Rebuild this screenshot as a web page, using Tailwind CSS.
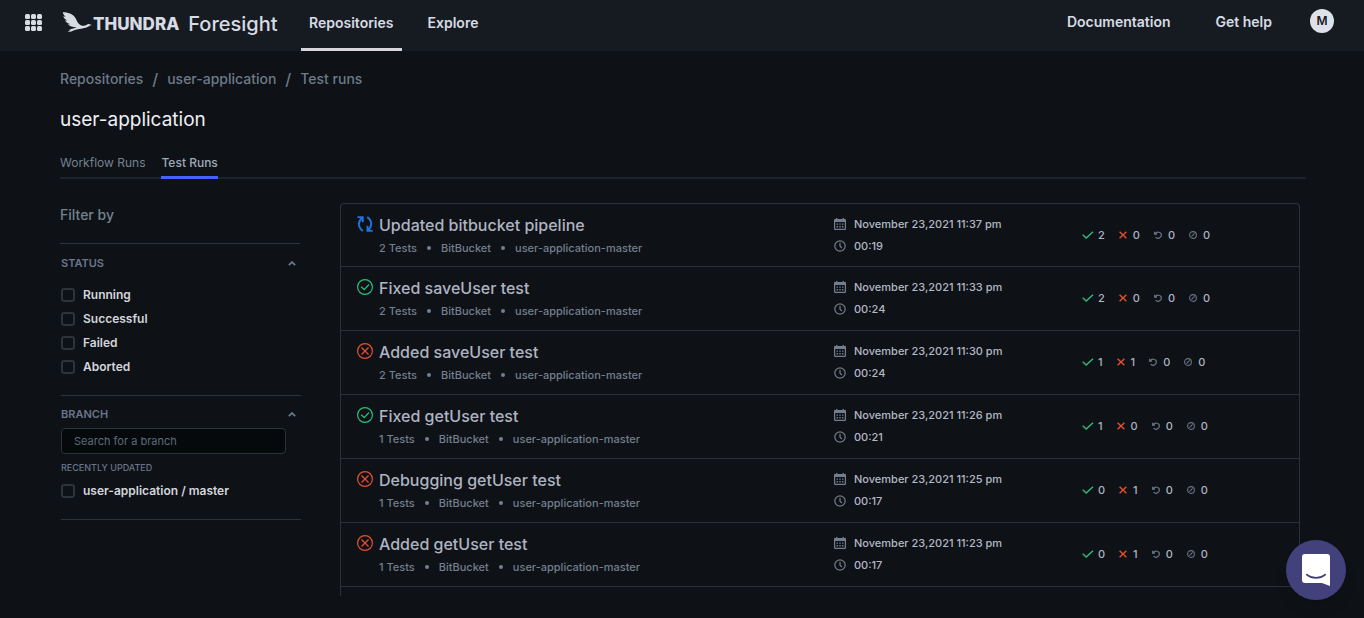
<!DOCTYPE html>
<html lang="en">
<head>
<meta charset="utf-8">
<meta name="viewport" content="width=device-width, initial-scale=1">
<title>user-application · Test runs</title>
<script src="https://cdn.jsdelivr.net/npm/@tailwindcss/browser@4"></script>
</head>
<body class="min-h-screen bg-[#0e1116] font-['Inter',sans-serif] text-[#d8dbe4]">

<svg class="hidden" aria-hidden="true">
  <symbol id="i-running" viewBox="0 0 16 16"><path d="M0.5 1.1H5.7V6.2M5.3 1.5C1.2 5.3 .2 10.8 5.8 14.9M15.7 14.9H10.5V9.8M10.9 14.5C15 10.7 15.8 4.9 10.2 1.1" fill="none" stroke="currentColor" stroke-width="1.9"/></symbol>
  <symbol id="i-ok" viewBox="0 0 16 16"><circle cx="8" cy="8" r="7.4" fill="none" stroke="currentColor" stroke-width="1.2"/><path d="M4.2 7.8L7.2 10.6L12 5.5" fill="none" stroke="currentColor" stroke-width="1.3"/></symbol>
  <symbol id="i-fail" viewBox="0 0 16 16"><circle cx="8" cy="8" r="7.4" fill="none" stroke="currentColor" stroke-width="1.2"/><path d="M4.5 4.5L11.5 11.5M11.5 4.5L4.5 11.5" fill="none" stroke="currentColor" stroke-width="1.2"/></symbol>
  <symbol id="i-calendar" viewBox="0 0 12 12"><path d="M1.2 1.5H10.8Q11.4 1.5 11.4 2.1V10.8Q11.4 11.4 10.8 11.4H1.2Q.6 11.4 .6 10.8V2.1Q.6 1.5 1.2 1.5Z" fill="none" stroke="currentColor" stroke-width="1.2"/><path d="M.6 1.5H11.4V4H.6ZM2 0H3.4V2H2ZM8.6 0H10V2H8.6ZM2.6 5.4h1.4v1.4h-1.4zM5.3 5.4h1.4v1.4h-1.4zM8 5.4h1.4v1.4H8zM2.6 8h1.4v1.4h-1.4zM5.3 8h1.4v1.4h-1.4zM8 8h1.4v1.4H8z" fill="currentColor"/></symbol>
  <symbol id="i-clock" viewBox="0 0 12 12"><circle cx="6" cy="6" r="5.2" fill="none" stroke="currentColor" stroke-width="1.2"/><path d="M6 2.8V6L7.8 8.2" fill="none" stroke="currentColor" stroke-width="1.2"/></symbol>
  <symbol id="i-check" viewBox="0 0 12 8"><path d="M.7 3.8L4.2 7L11 .8" fill="none" stroke="currentColor" stroke-width="1.4"/></symbol>
  <symbol id="i-cross" viewBox="0 0 8 8"><path d="M.6 .8L7.4 7.2M7.4 .8L.6 7.2" fill="none" stroke="currentColor" stroke-width="1.4"/></symbol>
  <symbol id="i-retry" viewBox="0 0 8 8"><path d="M.5 .8V3.2H3M.8 3C2.6 .2 7.4 .7 7.4 4.1C7.4 7.4 3.2 8.3 1.6 6.2" fill="none" stroke="currentColor" stroke-width="1.2"/></symbol>
  <symbol id="i-skip" viewBox="0 0 8 8"><circle cx="4" cy="4" r="3.4" fill="none" stroke="currentColor" stroke-width="1.1"/><path d="M2.4 5.6L5.6 2.4" stroke="currentColor" stroke-width="1.1"/></symbol>
  <symbol id="i-up" viewBox="0 0 8 5"><path d="M.8 4.2L4 1.1L7.2 4.2" fill="none" stroke="currentColor" stroke-width="1.8"/></symbol>
</svg>

<header class="flex h-[51px] items-start bg-[#161b22] pl-6 pr-[30px]">
  <button type="button" aria-label="Apps" class="mt-[13px] size-[18px]">
    <svg viewBox="0 0 18 18" class="size-[18px] fill-[#d8dbe4]"><rect x="1" y="1" width="5" height="5" rx="1.5"/><rect x="7" y="1" width="5" height="5" rx="1.5"/><rect x="13" y="1" width="5" height="5" rx="1.5"/><rect x="1" y="7" width="5" height="5" rx="1.5"/><rect x="7" y="7" width="5" height="5" rx="1.5"/><rect x="13" y="7" width="5" height="5" rx="1.5"/><rect x="1" y="13" width="5" height="5" rx="1.5"/><rect x="7" y="13" width="5" height="5" rx="1.5"/><rect x="13" y="13" width="5" height="5" rx="1.5"/></svg>
  </button>
  <a href="#" class="ml-5 mt-3 flex w-[239px] items-start whitespace-nowrap">
    <svg viewBox="0 0 30 20" class="h-5 w-[30px] shrink-0 fill-[#d8dbe4]"><path d="M.8 .3C5.5 .3 11 1.8 13.4 6C14.8 8.4 15.4 11.2 18.3 12.9C20.6 14 22.7 14.1 24.4 13.1C25.4 12.2 26.6 11.8 27.6 12.3L29.8 13L27.6 13.8C25.8 15.2 23.4 16.2 20.5 16.4C16.5 16.8 12.5 17.5 8.6 19.8L5.6 19.6L9 17.8L6.8 17.7C10.4 16.4 12.6 16.3 14.6 15.4C10.6 15.1 7.5 14.2 5.8 12.2L8.4 12.3C5.6 11.4 3.9 10.2 3 8.3L5.5 8.7C3.2 7.4 1.8 6 1.3 4.2L3.8 4.8C2.1 3.6 1.1 2.1 .8 .3Z"/></svg>
    <span class="ml-px text-[17px] leading-6 font-extrabold">THUNDRA</span>
    <span class="ml-[9px] text-xl leading-6 font-medium">Foresight</span>
  </a>
  <nav class="flex h-full text-sm leading-5 font-semibold">
    <a href="#" class="mr-[18px] h-full border-b-3 border-[#d6d5dc] px-2 pt-[13px]">Repositories</a>
    <a href="#" class="h-full px-2 pt-[13px]">Explore</a>
  </nav>
  <div class="ml-auto flex text-sm leading-5 font-semibold">
    <a href="#" class="mr-[45px] pt-3">Documentation</a>
    <a href="#" class="mr-[38px] pt-3">Get help</a>
    <button type="button" aria-label="Account" class="mt-[9px] size-6 rounded-full bg-[#dfe1ea] text-xs font-semibold text-[#161b22]">M</button>
  </div>
</header>

<main class="px-[60px] pr-[58px]">
  <nav aria-label="Breadcrumb" class="flex gap-[9px] pt-[18px] text-sm leading-5 font-medium text-[#6d7a8a]">
    <a href="#">Repositories</a><span class="text-base leading-5">/</span><a href="#">user-application</a><span class="text-base leading-5">/</span><a href="#">Test runs</a>
  </nav>
  <h1 class="mt-[17px] text-[19px] leading-7 text-[#eef0f5]">user-application</h1>
  <div class="mt-[19px] flex gap-4 border-b-2 border-[#1d2329] text-xs leading-5 font-medium text-[#74828f]">
    <a href="#" class="-mb-[2px] h-[26px] font-normal">Workflow Runs</a>
    <a href="#" class="-mb-[2px] h-[26px] border-b-3 border-[#4263ff] text-[#9eabb8]">Test Runs</a>
  </div>

  <div class="flex items-start gap-10">
    <aside class="w-60 shrink-0">
      <h2 class="pt-[26px] text-sm leading-5 font-medium text-[#74828f]">Filter by</h2>
      <section class="mt-[18px] border-t border-[#2d333b]">
        <button type="button" class="mt-[9px] flex h-5 w-full items-center justify-between pr-1 pl-px text-[11px] font-semibold text-[#69768a]">STATUS<svg class="h-[5px] w-2"><use href="#i-up"/></svg></button>
        <div id="statuses" class="mt-2.5"></div>
      </section>
      <section class="mt-4 ml-px w-60 border-y border-[#2d333b] pb-4">
        <button type="button" class="mt-2 flex h-5 w-full items-center justify-between pr-[5px] text-[11px] font-semibold text-[#69768a]">BRANCH<svg class="h-[5px] w-2"><use href="#i-up"/></svg></button>
        <input type="text" aria-label="Search for a branch" placeholder="Search for a branch" class="mt-1 block h-[26px] w-[225px] rounded-sm border border-[#2d333b] bg-[#06090c] px-3 text-[11px] placeholder:text-[#5f6b79]">
        <h3 class="mt-1.5 mb-[3px] text-[9px] leading-4 font-medium text-[#69768a]">RECENTLY UPDATED</h3>
        <label class="flex h-6 items-center gap-2 text-xs font-semibold text-[#d3d6dc]"><input type="checkbox" class="size-3.5 appearance-none rounded-[3px] border-2 border-[#2d333b] checked:bg-[#4263ff]">user-application / master</label>
      </section>
    </aside>
    <section id="runs" aria-label="Test runs" class="mt-6 mr-[6px] h-[393px] flex-1 overflow-hidden rounded-t-sm border border-b-0 border-[#2d3137]"></section>
  </div>
</main>

<button type="button" aria-label="Open chat" class="fixed right-[18px] bottom-[18px] size-[60px] rounded-full bg-[#43417c] shadow-lg">
  <svg viewBox="0 0 60 60" class="size-[60px]"><path d="M19 14H41Q44 14 44 17V46L36 43H19Q16 43 16 40V17Q16 14 19 14Z" fill="#fff"/><path d="M20.8 34.6C26 39 34 39 39.2 34.6" fill="none" stroke="#43417c" stroke-width="1.8" stroke-linecap="round"/></svg>
</button>

<script>
const icon = (id, cls) => `<svg class="${cls}" aria-hidden="true"><use href="#i-${id}"/></svg>`;

document.getElementById('statuses').innerHTML = ['Running', 'Successful', 'Failed', 'Aborted'].map(s =>
  `<label class="flex h-6 items-center gap-2 pl-px text-xs font-semibold text-[#d3d6dc]"><input type="checkbox" class="size-3.5 appearance-none rounded-[3px] border-2 border-[#2d333b] checked:bg-[#4263ff]">${s}</label>`).join('');

const stateIcon = {
  running: icon('running', 'mt-3 size-4 shrink-0 text-[#1f74dd]'),
  ok: icon('ok', 'mt-3 size-4 shrink-0 text-[#2bbd7e]'),
  fail: icon('fail', 'mt-3 size-4 shrink-0 text-[#e4512f]')
};
const runs = [
  ['running', 'Updated bitbucket pipeline', 2, '11:37', '00:19', 2, 0],
  ['ok', 'Fixed saveUser test', 2, '11:33', '00:24', 2, 0],
  ['fail', 'Added saveUser test', 2, '11:30', '00:24', 1, 1],
  ['ok', 'Fixed getUser test', 1, '11:26', '00:21', 1, 0],
  ['fail', 'Debugging getUser test', 1, '11:25', '00:17', 0, 1],
  ['fail', 'Added getUser test', 1, '11:23', '00:17', 0, 1]
];
document.getElementById('runs').innerHTML = runs.map(([state, title, tests, time, len, pass, fail]) => `
  <article class="grid h-16 grid-cols-[477fr_248fr_217fr] border-b border-[#2d3137] pl-4 first:h-[63px]">
    <div class="flex gap-1.5">
      ${stateIcon[state]}
      <div>
        <h2 class="mt-[9px] text-base leading-6 font-medium text-[#aeb4c2]"><a href="#">${title}</a></h2>
        <p class="mt-[3px] flex items-center gap-2.5 text-[11px] leading-4 font-medium text-[#737f8e]">${tests} Tests<span class="size-1 rounded-full bg-[#737f8e]"></span>BitBucket<span class="size-1 rounded-full bg-[#737f8e]"></span>user-application-master</p>
      </div>
    </div>
    <div class="pt-2.5 text-[11px] leading-5 font-medium text-[#b3b8c5]">
      <p class="flex items-center gap-2">${icon('calendar', 'size-3 text-[#737f8e]')}November 23,2021 ${time} pm</p>
      <p class="mt-0.5 flex items-center gap-2">${icon('clock', 'size-3 text-[#737f8e]')}${len}</p>
    </div>
    <div class="flex h-[62px] items-center gap-3.5 text-[11px] font-medium text-[#aeb4c2]">
      <span class="flex items-center gap-1">${icon('check', 'h-2 w-3 text-[#2bbd7e]')}${pass}</span>
      <span class="flex items-center gap-1.5">${icon('cross', 'size-2 text-[#e4512f]')}${fail}</span>
      <span class="flex items-center gap-1.5">${icon('retry', 'size-2 text-[#687483]')}0</span>
      <span class="flex items-center gap-1.5">${icon('skip', 'size-2 text-[#687483]')}0</span>
    </div>
  </article>`).join('');
</script>
</body>
</html>
